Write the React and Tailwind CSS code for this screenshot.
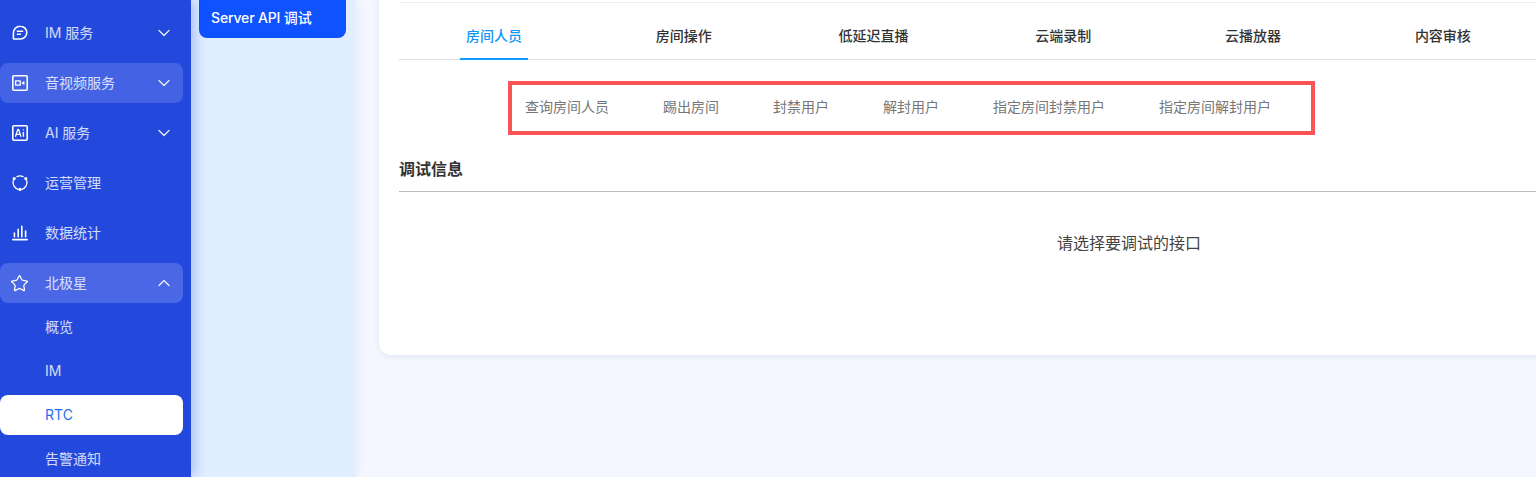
import { ChevronDown, ChevronUp, Star } from 'lucide-react';

const IconChat = () => (
  <svg width="16" height="16" viewBox="0 0 16 16" fill="none" stroke="currentColor" strokeWidth="1.6" strokeLinejoin="round" strokeLinecap="round">
    <path d="M8.4 1.2a6.4 6.4 0 0 1 0 12.8H2.2c-.5 0-.8-.3-.8-.8V8a6.8 6.8 0 0 1 7-6.8Z" />
    <path d="M5.4 6.2h5.2M5.4 9.2h3" />
  </svg>
);

const IconVideo = () => (
  <svg width="16" height="16" viewBox="0 0 16 16" fill="none" stroke="currentColor" strokeWidth="1.6" strokeLinejoin="round">
    <rect x="0.8" y="0.8" width="14.4" height="14.4" rx="1.2" />
    <rect x="3.6" y="5.8" width="4.6" height="4.4" strokeWidth="1.3" />
    <path d="M9.4 8l3-2.2v4.4z" fill="currentColor" stroke="none" />
  </svg>
);

const IconAi = () => (
  <svg width="16" height="16" viewBox="0 0 16 16" fill="none" stroke="currentColor" strokeWidth="1.6" strokeLinejoin="round">
    <rect x="0.8" y="0.8" width="14.4" height="14.4" rx="1.2" />
    <path d="M3.4 11.8 5.8 4.4h.8l2.4 7.4M4.4 9.4h3.6" strokeWidth="1.3" />
    <path d="M11.4 7v4.8M11.4 4.4v1.2" strokeWidth="1.4" />
  </svg>
);

const IconOps = () => (
  <svg width="16" height="16" viewBox="0 0 16 16" fill="none" stroke="currentColor" strokeWidth="1.3" strokeLinecap="round">
    <path d="M5 1.6a7 7 0 0 1 6 0M1.4 5.5a7 7 0 0 0 4.8 8.8M14.6 5.5a7 7 0 0 1-4.8 8.8" />
    <circle cx="2.2" cy="3.6" r="1.6" fill="currentColor" stroke="none" />
    <circle cx="13.8" cy="3.6" r="1.6" fill="currentColor" stroke="none" />
    <circle cx="8" cy="14.4" r="1.6" fill="currentColor" stroke="none" />
  </svg>
);

const IconBars = () => (
  <svg width="16" height="16" viewBox="0 0 16 16" fill="none" stroke="currentColor" strokeWidth="1.6" strokeLinecap="round">
    <path d="M0.8 14.6h14.4M2.4 11.8V8M6.2 11.8V4.4M9.8 11.8V1.2M13.6 11.8V6" />
  </svg>
);

const NAV = [
  { label: 'IM 服务', icon: <IconChat />, arrow: 'down' },
  { label: '音视频服务', icon: <IconVideo />, arrow: 'down', hover: true },
  { label: 'AI 服务', icon: <IconAi />, arrow: 'down' },
  { label: '运营管理', icon: <IconOps /> },
  { label: '数据统计', icon: <IconBars /> },
  { label: '北极星', icon: <Star size={19} strokeWidth={1.6} className="-ml-[2px]" />, arrow: 'up', open: true },
];

const SUB_NAV = ['概览', 'IM', 'RTC', '告警通知'];
const TABS = ['房间人员', '房间操作', '低延迟直播', '云端录制', '云播放器', '内容审核'];
const API_TABS = ['查询房间人员', '踢出房间', '封禁用户', '解封用户', '指定房间封禁用户', '指定房间解封用户'];

function Sidebar() {
  return (
    <aside className="w-[191px] shrink-0 h-full bg-[#2249dc] pt-[13px] pr-2 relative z-20 shadow-[4px_0_12px_rgba(34,73,220,0.28)]">
      <div className="flex flex-col gap-[10px]">
        {NAV.map((item) => (
          <div
            key={item.label}
            className={`h-10 flex items-center rounded-lg text-sm text-white/80 ${
              item.open ? 'bg-[#4a68e6]' : item.hover ? 'bg-[#4463e4]' : ''
            }`}
          >
            <span className="w-[45px] shrink-0 pl-[12px] text-white flex items-center">{item.icon}</span>
            <span className="flex-1">{item.label}</span>
            {item.arrow === 'down' && <ChevronDown size={20} className="mr-[9px] text-white/90" strokeWidth={1.5} />}
            {item.arrow === 'up' && <ChevronUp size={20} className="mr-[9px] text-white/90" strokeWidth={1.5} />}
          </div>
        ))}
      </div>
      <div className="flex flex-col gap-1 mt-1">
        {SUB_NAV.map((label) => (
          <div
            key={label}
            className={`h-10 flex items-center pl-[45px] rounded-lg text-sm ${
              label === 'RTC' ? 'bg-white text-[#1f70f0]' : 'text-white/80'
            }`}
          >
            {label}
          </div>
        ))}
      </div>
    </aside>
  );
}

function SubMenu() {
  return (
    <div className="w-[164px] shrink-0 h-full bg-[#e1eeff] pl-2 pr-[9px] relative z-10 shadow-[3px_0_8px_rgba(60,80,140,0.07)]">
      <div className="h-[38px] flex items-center pl-3 pb-[2px] rounded-b-lg bg-[#0f52ff] text-white text-sm font-medium tracking-[-0.15px]">
        Server API 调试
      </div>
    </div>
  );
}

export default function App() {
  return (
    <div
      className="h-[477px] w-[1536px] overflow-hidden flex bg-[#f4f7ff] text-[#333]"
      style={{ fontFamily: 'Inter, "Noto Sans CJK SC", sans-serif' }}
    >
      <Sidebar />
      <SubMenu />
      <main className="flex-1 min-w-0 pl-6">
        <div className="w-[1500px] h-[355px] bg-white rounded-bl-xl pl-5 shadow-[0_1px_6px_rgba(40,60,120,0.1)]">
          <div className="w-[1460px] pt-[2px]">
            <div className="border-t border-[#eeeeee] h-[57px] flex">
              {TABS.map((tab, i) => (
                <div key={tab} className="w-[189.8px] shrink-0 flex justify-center">
                  <div
                    className={`h-[57px] px-[6px] flex items-center text-sm font-medium ${
                      i === 0 ? 'pt-[11px] text-[#1296f5] border-b-2 border-[#0f9bff]' : 'pt-[9px] text-[#333]'
                    }`}
                  >
                    {tab}
                  </div>
                </div>
              ))}
            </div>
            <div className="border-t border-[#dddddd]" />
            <div className="pt-[21px] pl-[109px]">
              <div className="w-[807px] h-[54px] border-4 border-[#fb5457] pl-[13px] pb-[2px] flex items-center gap-[54px] text-sm text-[#777]">
                {API_TABS.map((tab) => (
                  <span key={tab}>{tab}</span>
                ))}
              </div>
            </div>
            <div className="mt-[22px] h-[35px] flex items-center border-b border-[#bbbbbb] pb-[10px] text-base font-semibold text-[#333]">
              调试信息
            </div>
            <div className="mt-[39px] text-center text-base text-[#444]">请选择要调试的接口</div>
          </div>
        </div>
      </main>
    </div>
  );
}
